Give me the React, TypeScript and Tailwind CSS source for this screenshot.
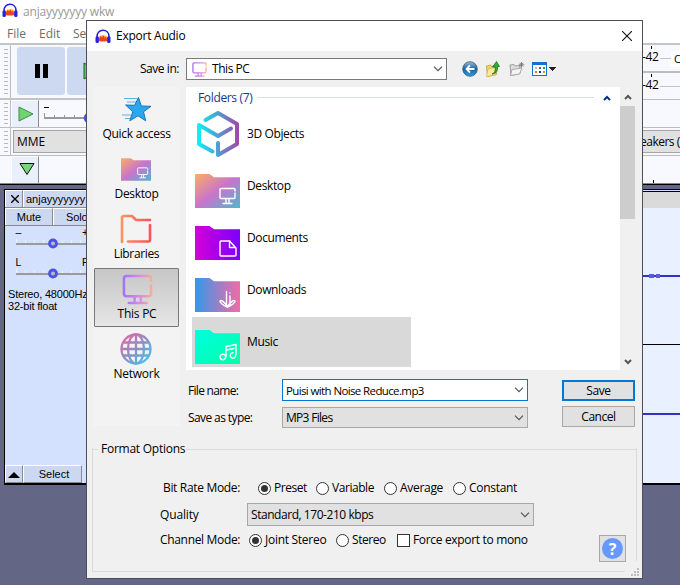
import React from "react";

const Headphones = ({ className }: { className: string }) => (
  <svg viewBox="0 0 16 15" className={className}>
    <rect x="4" y="6.5" width="8" height="6.5" rx="2" fill="#ffb21a" />
    <path d="M4 10l1.5-3L7 8.5 8.3 6l1.4 3 1.3-1.500 1 3v1.500H4z" fill="#f0421c" />
    <path d="M2 10V7.500C2 3.800 4.500 1.200 8 1.200s6 2.600 6 6.300V10" fill="none" stroke="#2020d8" strokeWidth="1.500" />
    <rect x="0.500" y="7.200" width="3.400" height="6.800" rx="1.500" fill="#2222e0" />
    <rect x="12.100" y="7.200" width="3.400" height="6.800" rx="1.500" fill="#2222e0" />
  </svg>
);

const Chevron = ({ className }: { className?: string }) => (
  <svg viewBox="0 0 10 6" className={"h-[6px] w-[10px] shrink-0 " + (className ?? "")}>
    <path d="M1 .7l4 4 4-4" fill="none" stroke="#555" strokeWidth="1.200" />
  </svg>
);

const MonitorIcon = ({ className, id, weight = 2.2 }: { className: string; id: string; weight?: number }) => (
  <svg viewBox="0 0 32 32" className={className}>
    <defs>
      <linearGradient id={id} gradientUnits="userSpaceOnUse" x1="0" y1="0" x2="32" y2="0">
        <stop offset="0" stopColor="#a070f8" />
        <stop offset=".5" stopColor="#cf86ee" />
        <stop offset="1" stopColor="#ffb08a" />
      </linearGradient>
    </defs>
    <g fill="none" stroke={"url(#" + id + ")"} strokeWidth={weight} strokeLinecap="round">
      <path d="M30 7V4.500a2.500 2.500 0 0 0-2.500-2.500H4.500A2.500 2.500 0 0 0 2 4.500v16A2.500 2.500 0 0 0 4.500 23h23a2.500 2.500 0 0 0 2.500-2.500V12M13 23.500v6M19.500 23.500v6M7 30.010L25.500 30" />
    </g>
  </svg>
);

const glyphs = {
  desktop: <path d="M40 17v-1.500a1 1 0 0 0-1-1H26a1 1 0 0 0-1 1v8a1 1 0 0 0 1 1h13a1 1 0 0 0 1-1V19M31 25v4M34 25v4M28 29.500h9" />,
  documents: <path d="M35 15h-9a1 1 0 0 0-1 1v13a1 1 0 0 0 1 1h14a1 1 0 0 0 1-1v-7L34.500 15v6.500H40" />,
  downloads: <path d="M31.500 13.500v14M35 15v0M35 18v9.500M25 23c1-1.500 3.500 0 7.500 5.500 4-5.500 6.500-7 7.500-5.500 0 2-3 4-7.500 6.500-4.500-2.500-7.500-4.500-7.500-6.500z" />,
  music: <path d="M31 27V16.500l10-2V25M31 20l8-1.500M30.500 26.500a2.800 2.800 0 1 1-2.800-2.300 2.500 2.500 0 0 1 2.800 2.300zM38 22.700a2.700 2.700 0 1 0 2.600 2.300" />,
};

const Folder = ({ id, kind, stops, diag, className }: { id: string; kind: keyof typeof glyphs; stops: string[]; diag?: boolean; className: string }) => (
  <svg viewBox="0 0 45 34" className={className}>
    <defs>
      <linearGradient id={id} x1="0" y1="0" x2="1" y2={diag ? "1" : "0"}>
        {stops.map((s, i) => (
          <stop key={i} offset={i / (stops.length - 1)} stopColor={s} />
        ))}
      </linearGradient>
    </defs>
    <path d="M0 0h14.500l4.500 3.300h26V34H0z" fill={"url(#" + id + ")"} />
    <g fill="none" stroke="#fff" strokeWidth="1.400" strokeLinecap="round" strokeLinejoin="round">{glyphs[kind]}</g>
  </svg>
);

const CubeIcon = () => (
  <svg viewBox="0 0 45 48" className="h-[48px] w-[45px]">
    <defs>
      <linearGradient id="cube" gradientUnits="userSpaceOnUse" x1="2" y1="0" x2="43" y2="0">
        <stop offset="0" stopColor="#05f5fa" />
        <stop offset=".5" stopColor="#4f9fd4" />
        <stop offset="1" stopColor="#a04aa8" />
      </linearGradient>
    </defs>
    <g fill="none" stroke="url(#cube)" strokeWidth="4" strokeLinecap="round" strokeLinejoin="round">
      <path d="M10.500 10L23 3l19 11v20L23 45V33" />
      <path d="M17.500 41.500L4 34V15l19 11 13-7.500" />
    </g>
  </svg>
);

const StarIcon = () => (
  <svg viewBox="0 0 32 26" className="h-[26px] w-[32px]">
    <path d="M18.500 1.500l2.800 8.500 9.700.3-7.500 5.500 2.200 9-7.700-5-8.200 5 3-9-7.200-6.800 9 .3z" fill="#2aa7ee" stroke="#1b74bb" strokeWidth="1" />
    <path d="M4 2.500h13M7 6h9M2 19h9M5 22.500h5" stroke="#55b4e8" strokeWidth="1" />
  </svg>
);

const LibrariesIcon = () => (
  <svg viewBox="0 0 32 30" className="h-[30px] w-[32px]">
    <defs>
      <linearGradient id="lib" gradientUnits="userSpaceOnUse" x1="0" y1="0" x2="32" y2="0">
        <stop offset="0" stopColor="#ff9560" />
        <stop offset="1" stopColor="#fb5058" />
      </linearGradient>
    </defs>
    <path d="M2 28V3.500Q2 2 4 2h8l4 4h14M30 11v15q0 1.500-1.500 1.500H8" fill="none" stroke="url(#lib)" strokeWidth="2.600" strokeLinecap="round" strokeLinejoin="round" />
  </svg>
);

const NetworkIcon = () => (
  <svg viewBox="0 0 32 32" className="h-[32px] w-[32px]">
    <defs>
      <linearGradient id="net" gradientUnits="userSpaceOnUse" x1="4" y1="2" x2="28" y2="30">
        <stop offset="0" stopColor="#e864a4" />
        <stop offset=".5" stopColor="#8a90c4" />
        <stop offset="1" stopColor="#3fc4ee" />
      </linearGradient>
    </defs>
    <g fill="none" stroke="url(#net)" strokeWidth="2.300">
      <circle cx="16" cy="16" r="14.500" />
      <ellipse cx="16" cy="16" rx="8" ry="14.500" />
      <path d="M16 1.500v29M3.500 9.500h25M1.500 16h29M3.500 22.500h25" />
    </g>
  </svg>
);

const Combo = ({ children, className }: { children: React.ReactNode; className: string }) => (
  <div className={"flex items-center border pl-[3px] pr-[3px] " + className}>
    <div className="flex flex-1 items-center whitespace-nowrap">{children}</div>
    <Chevron />
  </div>
);

const Radio = ({ label, on, className, text }: { label: string; on?: boolean; className: string; text: string }) => (
  <label className={"flex shrink-0 items-center " + className}>
    <span className="mr-[3px] flex size-[13px] items-center justify-center rounded-full border border-[#333] bg-white">
      {on && <span className="size-[7px] rounded-full bg-[#333]" />}
    </span>
    <span className={text}>{label}</span>
  </label>
);

const Grip = ({ n }: { n: number }) => (
  <div className="flex w-[10px] shrink-0 flex-col items-center justify-center gap-[3px] pl-px">
    {Array.from({ length: n }, (_, i) => (
      <i key={i} className="block h-px w-[4px] bg-[#b9b9b9]" />
    ))}
  </div>
);

const TrackSlider = ({ left, right }: { left: string; right: string }) => (
  <svg viewBox="0 0 81 30" className="block h-[30px] w-[81px]">
    <g fontFamily="Liberation Sans" fontSize="10.500" fill="#000">
      <text x="10.500" y="10">{left}</text>
      <text x="77" y="10">{right}</text>
    </g>
    <path d="M11.500 13v5M20.500 14.500v3M29.500 14.500v3M38.500 14.500v3M57.500 14.500v3M66.500 14.500v3M75.500 14.500v3" stroke="#eef2fa" />
    <path d="M11 18h70" stroke="#9a9a9a" strokeWidth="2" />
    <circle cx="48" cy="17.500" r="3.500" fill="#b8b8c0" stroke="#4a52ea" strokeWidth="2.800" />
  </svg>
);

const bevel = "border-t border-l border-r border-t-white border-l-white border-r-[#8a8a8a]";

function LeftPane() {
  return (
    <div className="flex w-[640px] flex-col">
      <div className="flex h-[141px] flex-col bg-[#f8f8ff]">
        <div className="flex h-[57px] border-y-2 border-[#c4c4c4]">
          <Grip n={12} />
          <div className="flex border-l border-[#bdbdbd] pl-[6px] pt-[2px]">
            <div className="mr-[2px] flex h-[48px] w-[48px] items-center justify-center gap-[3px] rounded-[3px] bg-[#cdd9f0]">
              <i className="h-[14px] w-[5px] bg-black" />
              <i className="h-[14px] w-[5px] bg-black" />
            </div>
            <div className="flex h-[48px] w-[48px] items-center justify-center rounded-[3px] bg-[#cdd9f0]">
              <svg viewBox="0 0 16 18" className="h-[18px] w-[16px]">
                <path d="M1 1v16l14-8z" fill="#5cc85c" stroke="#245a24" />
              </svg>
            </div>
          </div>
        </div>
        <div className="flex h-[28px] border-b border-[#bdbdbd]">
          <Grip n={6} />
          <div className="flex border-l border-[#bdbdbd]">
            <div className={"flex w-[28px] items-center justify-center bg-[#eaeffc] pl-px " + bevel}>
              <svg viewBox="0 0 16 16" className="h-[16px] w-[16px]">
                <path d="M1 1v14l14-7z" fill="#70d470" stroke="#3f8f4a" />
              </svg>
            </div>
            <svg viewBox="0 0 60 27" className="ml-[4px] h-[27px] w-[60px]">
              <path d="M1 7.500h5" stroke="#000" />
              <path d="M1.500 13v5M11.500 15v3M21.500 15v3M31.500 15v3" stroke="#999" />
              <path d="M1 18h59" stroke="#999" strokeWidth="2" />
              <circle cx="46" cy="18" r="4" fill="#b8b8c0" stroke="#4a52ea" strokeWidth="2.600" />
            </svg>
          </div>
        </div>
        <div className="flex h-[28px] border-b border-[#bdbdbd]">
          <Grip n={6} />
          <div className="flex flex-1 border-l border-[#bdbdbd] py-[2px] pl-[2px]">
            <div className="flex flex-1 items-center border border-[#a5a5a5] bg-[#e1e1e1] pl-[3px]">MME</div>
          </div>
        </div>
        <div className="flex h-[28px] border-b border-[#888]">
          <div className="w-[10px]" />
          <div className={"ml-px flex w-[28px] items-center justify-center bg-[#eaeffc] pb-[2px] pl-[3px] " + bevel}>
            <svg viewBox="0 0 16 14" className="h-[14px] w-[16px] shrink-0">
              <path d="M1 1.500h14L8 12.500z" fill="#78d878" stroke="#111" />
            </svg>
          </div>
        </div>
      </div>
      <div className="h-px bg-black" />
      <div className="h-[4px] bg-[#636684]" />
      <div className="ml-[4px] flex h-[296px] flex-col border-b-2 border-l border-t border-black bg-[#d4e1fe] font-['Liberation_Sans',sans-serif] text-[11px]">
        <div className="flex h-[18px] border-b border-[#8a8a8a] bg-[#ccd8f0]">
          <div className={"flex w-[18px] items-center justify-center pl-[2px] " + bevel}>
            <svg viewBox="0 0 8 8" className="size-[8px]"><path d="M0 0l8 8M8 0L0 8" stroke="#000" strokeWidth="1.400" /></svg>
          </div>
          <div className="flex w-[70px] items-center border-l border-t border-white pl-[2px]">anjayyyyyyy</div>
        </div>
        <div className="flex h-[18px] border-b border-[#8a8a8a] bg-[#ccd8f0]">
          <div className={"flex w-[48px] items-center justify-center " + bevel}>Mute</div>
          <div className="flex flex-1 items-center border-l border-t border-white pl-[12px] tracking-[-0.150px]">Solo</div>
        </div>
        <div className="pt-0">
          <TrackSlider left="–" right="+" />
          <TrackSlider left="L" right="R" />
        </div>
        <div className="whitespace-nowrap pl-[3px] pt-[2px] leading-[12px] tracking-[-0.200px]">
          Stereo, 48000Hz
          <br />
          32-bit float
        </div>
        <div className="mt-auto flex h-[18px]">
          <div className={"flex w-[18px] items-center justify-center border-b border-b-[#8a8a8a] bg-[#ccd8f0] " + bevel}>
            <svg viewBox="0 0 12 6" className="mt-[2px] h-[6px] w-[12px]"><path d="M0 6h12L6 0z" /></svg>
          </div>
          <div className={"flex w-[59px] items-center justify-center border-b border-b-[#8a8a8a] bg-[#ccd8f0] pl-[3px] " + bevel}>Select</div>
        </div>
      </div>
    </div>
  );
}

const Meter = ({ tag, className }: { tag?: string; className: string }) => (
  <div className={"flex items-center border-b border-[#bdbdbd] " + className}>
    <div className="flex h-full w-[18px] flex-col">
      <i className="ml-[9px] h-[3px] w-px shrink-0 bg-black" />
      <span className="text-[12px] leading-[16px] tracking-[-0.400px]">-42</span>
    </div>
    <div className="h-px flex-1 bg-[#c4c4c4]" />
    {tag && <div className="w-[9px] overflow-hidden bg-white pl-[3px] text-[11px] leading-[16px]">{tag}</div>}
  </div>
);

function RightPane() {
  return (
    <div className="flex w-[40px] flex-col whitespace-nowrap">
      <div className="flex h-[141px] flex-col overflow-hidden border-t-2 border-[#c4c4c4] bg-[#f8f8ff]">
        <Meter className="h-[28px] border-b-2 pl-[2px] pt-px" tag="C" />
        <Meter className="h-[27px] pl-[2px] pt-px" />
        <div className="h-[28px] border-b border-[#bdbdbd]" />
        <div className="h-[28px] border-b border-[#bdbdbd] py-[2px]">
          <div className="h-[23px] border-y border-[#a5a5a5] bg-[#e1e1e1] leading-[22px] tracking-[-0.500px]">eakers (2</div>
        </div>
        <div className="flex flex-1 items-end border-b border-[#888] pl-[13px]"><i className="h-[3px] w-px bg-black" /></div>
      </div>
      <div className="h-px bg-black" />
      <div className="h-[4px] bg-[#636684]" />
      <div className="h-[3px] border-y border-black bg-[#cfe0ff]" />
      <div className="h-[16px] bg-[#dadada]" />
      <svg viewBox="0 0 40 277" className="block h-[277px] w-[40px] bg-[#e9f0ff]" shapeRendering="crispEdges">
        <path d="M0 68h40M0 206h40" stroke="#3232c8" strokeWidth="2" />
        <path d="M9 68h5M16 68h4" stroke="#5a5ae0" strokeWidth="4" />
        <path d="M0 136.500h40" stroke="#000" />
        <path d="M0 276h40" stroke="#000" strokeWidth="2" />
      </svg>
    </div>
  );
}

const places = [
  { name: "Quick access", icon: <StarIcon />, text: "tracking-[-0.250px]" },
  { name: "Desktop", icon: <Folder id="fs" kind="desktop" diag stops={["#fbae62", "#c974cc", "#4db8cc"]} className="h-[23px] w-[30px]" />, text: "tracking-[-0.350px]" },
  { name: "Libraries", icon: <LibrariesIcon />, text: "tracking-[-0.350px]" },
  { name: "This PC", icon: <MonitorIcon id="pc" weight={2.6} className="size-[31px]" />, text: "tracking-[-0.250px]" },
  { name: "Network", icon: <NetworkIcon />, text: "tracking-[-0.250px]" },
];

const folders = [
  { name: "3D Objects", icon: <CubeIcon /> },
  { name: "Desktop", icon: <Folder id="f1" kind="desktop" diag stops={["#fbae62", "#c974cc", "#4db8cc"]} className="h-[34px] w-[45px]" /> },
  { name: "Documents", icon: <Folder id="f2" kind="documents" stops={["#d400d8", "#7c00fc"]} className="h-[34px] w-[45px]" /> },
  { name: "Downloads", icon: <Folder id="f3" kind="downloads" stops={["#3498ea", "#f26ba8"]} className="h-[34px] w-[45px]" /> },
  { name: "Music", icon: <Folder id="f4" kind="music" diag stops={["#00ffe0", "#00ffa8"]} className="h-[34px] w-[45px]" /> },
];

const ToolIcons = () => (
  <div className="ml-[15px] flex items-center">
    <svg viewBox="0 0 16 16" className="size-[16px]">
      <defs><linearGradient id="bk" x1="0" y1="0" x2="0" y2="1"><stop offset="0" stopColor="#9dbbd4" /><stop offset=".5" stopColor="#19609f" /><stop offset="1" stopColor="#2ba2dc" /></linearGradient></defs>
      <circle cx="8" cy="8" r="7.300" fill="url(#bk)" stroke="#3a5c7c" strokeWidth=".8" />
      <path d="M12.500 8H4.500M8 4.500L4.500 8 8 11.500" fill="none" stroke="#fff" strokeWidth="1.800" />
    </svg>
    <svg viewBox="0 0 16 16" className="ml-[7px] size-[16px]">
      <path d="M1.500 5l4-1 1 1.500 5-1v9l-9 2z" fill="#f5d56a" stroke="#c49a2c" strokeWidth=".8" />
      <path d="M3 8l8-2-1 8-8.500 1.500z" fill="#fdeb9c" stroke="#caa53c" strokeWidth=".6" />
      <path d="M7 13c3-1 3.500-4 3-7H7.500l4-5.500 3 5H12.500c.5 4-1 7-5.500 7.500z" fill="#2fae2f" stroke="#17691a" strokeWidth=".7" />
    </svg>
    <svg viewBox="0 0 16 16" className="ml-[8px] size-[16px]">
      <path d="M1 4l4-.5 1 1.500 5-.5v8L2 14.500z" fill="#dedede" stroke="#8b8b8b" strokeWidth=".8" />
      <path d="M3 8.500l10-1.500-2.500 6L1.500 14.500z" fill="#f4f4f4" stroke="#999" strokeWidth=".8" />
      <path d="M12.500 1v5.500M9.800 3.800h5.500M10.700 1.900l3.600 3.700M14.300 1.900l-3.600 3.700" stroke="#777" strokeWidth=".9" />
    </svg>
    <svg viewBox="0 0 24 14" className="ml-[7px] h-[14px] w-[24px]" shapeRendering="crispEdges">
      <rect x="0" y="0" width="15" height="14" fill="#1670d0" />
      <rect x="1" y="3" width="13" height="10" fill="#fff" />
      <path d="M3 5h2v2H3z" fill="#b0b8d0" /><path d="M7 5h2v2H7z" fill="#4060b0" /><path d="M11 5h2v2h-2z" fill="#30a030" />
      <path d="M3 9h2v2H3z" fill="#f06848" /><path d="M7 9h2v2H7z" fill="#2030a0" /><path d="M11 9h2v2h-2z" fill="#c8a000" />
      <path d="M17 5h7l-3.500 4z" fill="#222" />
    </svg>
  </div>
);

function Dialog() {
  return (
    <div className="absolute left-[86px] top-[20px] flex h-[559px] w-[557px] flex-col border border-[#4c4e5c] bg-[#f0f0f0]">
      <div className="flex h-[30px] shrink-0 items-center bg-white pl-[8px] pr-[10px]">
        <Headphones className="h-[15px] w-[16px]" />
        <span className="ml-[5px] flex-1 tracking-[-0.250px]">Export Audio</span>
        <svg viewBox="0 0 10 10" className="size-[10px]"><path d="M0 0l10 10M10 0L0 10" stroke="#111" strokeWidth="1.100" /></svg>
      </div>

      <div className="flex h-[36px] shrink-0 items-center">
        <span className="w-[92px] text-right tracking-[-0.450px]">Save in:</span>
        <Combo className="ml-[7px] h-[22px] w-[261px] border-[#7a7a7a] bg-white">
          <MonitorIcon id="pcs" weight={2.8} className="ml-[2px] mr-[5px] size-[15px]" />
          <span className="tracking-[-0.450px]">This PC</span>
        </Combo>
        <ToolIcons />
      </div>

      <div className="flex h-[342px] shrink-0 pl-[6px]">
        <div className="flex h-[339px] w-[87px] flex-col bg-[#f3f3f3] pt-[1px]">
          {places.map((p) => (
            <div key={p.name} className="h-[60px] px-px">
              <div className={"flex h-[59px] flex-col items-center border " + (p.name === "This PC" ? "rounded-[1px] border-[#777] bg-linear-to-b from-[#c6c6c6] to-[#e6e6e6]" : "border-transparent")}>
                <div className={"flex h-[36px] shrink-0 items-center " + (p.name === "This PC" ? "mt-[2px] pl-px" : "mt-[2px] pr-[2px]")}>{p.icon}</div>
                <span className={"leading-[16px] " + (p.name === "This PC" ? "-mt-px pl-px " : "-mt-px ") + p.text}>{p.name}</span>
              </div>
            </div>
          ))}
        </div>

        <div className="ml-[6px] flex flex-1 flex-col">
          <div className="flex h-[283px] w-[449px] shrink-0">
            <div className="flex flex-1 flex-col overflow-hidden bg-white">
              <div className="flex h-[21px] shrink-0 items-center pl-[12px] pr-[9px] text-[#1e3287]">
                <span className="w-[59px] tracking-[-0.350px]">Folders (7)</span>
                <i className="h-px w-[337px] bg-[#d5dff0]" />
                <svg viewBox="0 0 8 6" className="ml-auto h-[6px] w-[8px]"><path d="M1 5l3-3 3 3" fill="none" stroke="#003399" strokeWidth="2" /></svg>
              </div>
              {folders.map((f) => (
                <div key={f.name} className={"mb-[2px] ml-[6px] flex h-[50px] w-[219px] shrink-0 pl-[3px] " + (f.name === "Music" ? "mt-[1px] bg-[#d9d9d9]" : "")}>
                  <div className={"mr-[7px] flex shrink-0 flex-col justify-end " + (f.name === "Music" ? "h-[47px]" : f.name === "3D Objects" ? "h-[50px]" : "h-[48px]")}>{f.icon}</div>
                  <span className={"tracking-[-0.380px] " + (f.name === "Music" ? "leading-[49px]" : "leading-[51px]")}>{f.name}</span>
                </div>
              ))}
            </div>
            <div className="flex w-[15px] flex-col items-center bg-[#f0f0f0]">
              <div className="flex h-[19px] items-center"><svg viewBox="0 0 8 6" className="h-[6px] w-[8px]"><path d="M1 5l3-3 3 3" fill="none" stroke="#555" strokeWidth="2" /></svg></div>
              <div className="h-[113px] w-full bg-[#cdcdcd]" />
              <div className="mb-[5px] mt-auto"><svg viewBox="0 0 8 6" className="h-[6px] w-[8px]"><path d="M1 1l3 3 3-3" fill="none" stroke="#555" strokeWidth="2" /></svg></div>
            </div>
          </div>
          <div className="mt-[9px] flex h-[22px] shrink-0 items-start">
            <span className="w-[96px] pl-[2px] leading-[24px] tracking-[-0.700px]">File name:</span>
            <Combo className="h-[22px] w-[246px] border-[#0078d7] bg-white"><span className="pt-[2px] text-[11.500px] tracking-[-0.620px]">Puisi with Noise Reduce.mp3</span></Combo>
            <button className="ml-[34px] mt-px h-[21px] w-[73px] border-2 border-[#0078d7] bg-[#e1e1e1] leading-[17px] tracking-[-0.400px]">Save</button>
          </div>
          <div className="mt-[5px] flex h-[22px] shrink-0 items-start">
            <span className="w-[96px] pl-[2px] leading-[23px] tracking-[-0.600px]">Save as type:</span>
            <Combo className="mt-px h-[21px] w-[246px] border-[#a8a8a8] bg-[#e1e1e1]"><span className="pt-px tracking-[-0.700px]">MP3 Files</span></Combo>
            <button className="ml-[34px] h-[21px] w-[73px] border border-[#a8a8a8] bg-[#e1e1e1] leading-[19px] tracking-[-0.450px]">Cancel</button>
          </div>
        </div>
      </div>

      <div className="relative ml-[5px] mt-[12px] flex h-[131px] w-[545px] flex-col">
        <div className="flex h-[16px] items-center whitespace-nowrap">
          <i className="h-px w-[6px] bg-[#dcdcdc]" />
          <span className="w-[88px] pl-[3px] tracking-[-0.250px]">Format Options</span>
          <i className="h-px flex-1 bg-[#dcdcdc]" />
        </div>
        <i className="absolute left-0 top-[7px] h-[124px] w-px bg-[#dcdcdc]" />
        <i className="absolute right-0 top-[7px] h-[113px] w-px bg-[#dcdcdc]" />
        <i className="absolute bottom-0 left-0 h-px w-[533px] bg-[#dcdcdc]" />
        <div className="mt-[22px] flex h-[18px] shrink-0 items-center whitespace-nowrap pl-[71px]">
          <span className="w-[95px] tracking-[-0.330px]">Bit Rate Mode:</span>
          <Radio on label="Preset" className="w-[58px]" text="tracking-[-0.450px]" />
          <Radio label="Variable" className="w-[68px]" text="tracking-[-0.450px]" />
          <Radio label="Average" className="w-[69px]" text="tracking-[-0.300px]" />
          <Radio label="Constant" className="" text="tracking-[-0.300px]" />
        </div>
        <div className="mt-[6px] flex h-[23px] shrink-0 items-center pl-[68px]">
          <span className="w-[87px] tracking-[-0.150px]">Quality</span>
          <Combo className="h-[23px] w-[287px] border-[#a8a8a8] bg-[#e1e1e1]"><span className="tracking-[-0.450px]">Standard, 170-210 kbps</span></Combo>
        </div>
        <div className="mt-[5px] flex h-[18px] shrink-0 items-center whitespace-nowrap pl-[68px]">
          <span className="w-[89px] tracking-[-0.330px]">Channel Mode:</span>
          <Radio on label="Joint Stereo" className="w-[87px]" text="tracking-[-0.280px]" />
          <Radio label="Stereo" className="w-[61px]" text="tracking-[-0.450px]" />
          <span className="mr-[3px] size-[13px] border border-[#333] bg-white" />
          <span className="tracking-[-0.330px]">Force export to mono</span>
        </div>
        <div className="absolute left-[507px] top-[94px] flex size-[27px] items-center justify-center border border-[#a8a8a8] bg-[#e1e1e1]">
          <div className="flex size-[21px] items-center justify-center rounded-full bg-[#6699ff] font-['Open_Sans',sans-serif] text-[16px] font-bold leading-none text-white">?</div>
        </div>
      </div>
      <svg viewBox="0 0 8 8" className="absolute bottom-[2px] right-[3px] size-[8px]" fill="#bdbdbd" shapeRendering="crispEdges">
        <path d="M6 0h2v2H6zM3 3h2v2H3zM6 3h2v2H6zM0 6h2v2H0zM3 6h2v2H3zM6 6h2v2H6z" />
      </svg>
    </div>
  );
}

export default function App() {
  return (
    <div className="relative h-[585px] w-[680px] overflow-hidden bg-[#636684] font-['Open_Sans','Noto_Sans',sans-serif] text-[12px] leading-[16px] text-black">
      <div className="flex h-[24px] items-center bg-white pl-[2px] text-[#999]">
        <Headphones className="mb-[3px] h-[15px] w-[16px]" />
        <span className="ml-[5px] tracking-[-0.180px]">anjayyyyyyy wkw</span>
      </div>
      <div className="flex h-[19px] items-center bg-white pl-[7px] text-[#6d6d6d]">
        <span className="w-[32px]">File</span>
        <span className="w-[34px]">Edit</span>
        <span>Select</span>
      </div>
      <div className="flex">
        <LeftPane />
        <RightPane />
      </div>
      <Dialog />
    </div>
  );
}
